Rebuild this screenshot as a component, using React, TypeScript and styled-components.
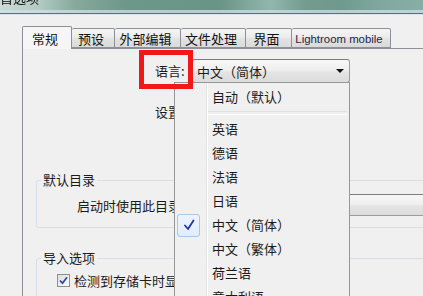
import React from "react";
import styled, { createGlobalStyle } from "styled-components";

const Global = createGlobalStyle`
  html, body { margin: 0; padding: 0; background: #f0f0f0; }
  body {
    font-family: "Noto Sans CJK SC", "Noto Sans", "Liberation Sans", sans-serif;
    font-size: 13px;
    color: #1b1b1b;
  }
  * { box-sizing: border-box; }
`;

const Window = styled.div`
  position: relative;
  width: 423px;
  height: 296px;
  overflow: hidden;
  background: #f0f0f0;
  display: flex;
  flex-direction: column;
`;

const TitleBar = styled.div`
  flex: none;
  height: 15px;
  overflow: hidden;
  background:
    linear-gradient(to bottom, rgba(0,0,0,0) 0 10px, rgba(205,225,234,0.75) 10px 13px, #5e6e7a 13px 14px, #dfe3e6 14px 15px),
    linear-gradient(to right, #cadbd4 0%, #b4cbc3 9%, #86a99c 18%, #6d9789 30%, #6a9486 52%, #7ea69a 58%, #93b6ac 64%, #739c8f 72%, #6f998c 80%, #80a89e 90%, #88aea5 100%);
`;

const TitleText = styled.div`
  font-size: 13px;
  line-height: 16px;
  margin-top: -10px;
  color: #101010;
  filter: blur(0.35px);
`;

const Body = styled.div`
  flex: 1;
  min-height: 0;
  display: flex;
  flex-direction: column;
  padding: 11px 0 0 22px;
`;

const TabRow = styled.div`
  flex: none;
  display: flex;
  align-items: flex-end;
  height: 22px;
  position: relative;
  z-index: 1;
`;

const Tab = styled.div<{ $w: number; $active?: boolean; $latin?: boolean }>`
  width: ${(p) => p.$w}px;
  height: ${(p) => (p.$active ? 23 : 20)}px;
  margin-bottom: ${(p) => (p.$active ? -1 : 0)}px;
  border: 1px solid #8d9097;
  border-bottom: ${(p) => (p.$active ? "none" : "1px solid #8d9097")};
  border-left-width: ${(p) => (p.$active ? 1 : 0)}px;
  border-radius: 2px 2px 0 0;
  background: ${(p) =>
    p.$active
      ? "#f6f6f6"
      : "linear-gradient(#f5f5f5, #ececec 45%, #e2e2e2 55%, #dadada)"};
  display: flex;
  align-items: center;
  justify-content: center;
  padding-right: 4px;
  padding-top: ${(p) => (p.$active ? 0 : 1)}px;
  font-family: ${(p) =>
    p.$latin ? `"Liberation Sans", Arial, sans-serif` : "inherit"};
  font-size: ${(p) => (p.$latin ? "11.4px" : "13px")};
  color: ${(p) => (p.$latin ? "#1c2748" : "#111")};
  white-space: nowrap;
`;

const Panel = styled.div`
  flex: 1;
  border-top: 1px solid #8d9097;
  border-left: 1px solid #8d9097;
  padding-left: 13px;
  display: flex;
  flex-direction: column;
`;

const FieldRow = styled.div<{ $top: number }>`
  display: flex;
  align-items: center;
  height: 24px;
  margin-top: ${(p) => p.$top}px;
  padding-left: 119px;
  gap: 7px;
`;

const FieldLabel = styled.span`
  width: 30px;
  white-space: nowrap;
  line-height: 16px;
`;

const Combo = styled.div<{ $w: number; $h: number }>`
  width: ${(p) => p.$w}px;
  height: ${(p) => p.$h}px;
  flex: none;
  border: 1px solid #9c9c9c;
  border-top-color: #7c7c7c;
  border-radius: 3px;
  background: linear-gradient(#f7f7f7, #efefef 45%, #e4e4e4 55%, #dcdcdc);
  display: flex;
  align-items: center;
  justify-content: space-between;
  padding: 0 5px 0 4px;
  white-space: nowrap;
`;

const Arrow = styled.span`
  width: 0;
  height: 0;
  border-left: 4px solid transparent;
  border-right: 4px solid transparent;
  border-top: 4px solid #111;
`;

const GroupBox = styled.div<{ $top: number; $pb: number }>`
  width: 420px;
  margin-top: ${(p) => p.$top}px;
  border: 1px solid #d5dfe5;
  border-radius: 3px;
  padding-bottom: ${(p) => p.$pb}px;
  display: flex;
  flex-direction: column;
`;

const GroupTitle = styled.span`
  align-self: flex-start;
  margin: -9px 0 0 4px;
  padding: 0 2px;
  background: #f0f0f0;
  line-height: 16px;
  font-size: 13px;
  white-space: nowrap;
`;

const GroupRow = styled.div<{ $top: number; $indent: number }>`
  display: flex;
  align-items: center;
  margin-top: ${(p) => p.$top}px;
  padding-left: ${(p) => p.$indent}px;
  gap: 4px;
  white-space: nowrap;
`;

const CheckBox = styled.span`
  width: 13px;
  height: 13px;
  flex: none;
  border: 1px solid #8e8f8f;
  background: linear-gradient(135deg, #dcdcdc, #fdfdfd);
  display: flex;
  align-items: center;
  justify-content: center;
`;

const Menu = styled.div`
  position: absolute;
  left: 174px;
  top: 82px;
  width: 176px;
  height: 240px;
  border: 1px solid #979797;
  padding-top: 2px;
  background: linear-gradient(
    to right,
    #f0f0f0 0 31px,
    #e2e3e3 31px 32px,
    #ffffff 32px 33px,
    #f0f0f0 33px
  );
  z-index: 5;
`;

const MenuItem = styled.div`
  display: grid;
  grid-template-columns: 31px 1fr;
  align-items: center;
  height: 24px;
`;

const MenuText = styled.span`
  padding-left: 6px;
  line-height: 16px;
  font-size: 13px;
  color: #1a1a1a;
  white-space: nowrap;
`;

const Gutter = styled.span`
  display: flex;
  align-items: center;
  padding-left: 2px;
  height: 24px;
`;

const CheckMark = styled.span`
  width: 23px;
  height: 23px;
  border: 1px solid #a9c6ee;
  border-radius: 3px;
  background: linear-gradient(#eef4fd, #e2ecfb);
  display: flex;
  align-items: center;
  justify-content: center;
`;

const Separator = styled.div`
  height: 8px;
  display: flex;
  align-items: center;
  padding: 0 2px 0 33px;
  &::after {
    content: "";
    flex: 1;
    height: 2px;
    border-top: 1px solid #e0e0e0;
    border-bottom: 1px solid #ffffff;
  }
`;

const Highlight = styled.div`
  position: absolute;
  left: 139px;
  top: 50px;
  width: 54px;
  height: 39px;
  border: 5px solid #f01818;
  z-index: 10;
`;

const tabs: { label: string; w: number; latin?: boolean }[] = [
  { label: "常规", w: 50 },
  { label: "预设", w: 43 },
  { label: "外部编辑", w: 66 },
  { label: "文件处理", w: 65 },
  { label: "界面", w: 46 },
  { label: "Lightroom mobile", w: 99, latin: true },
];

const languages = [
  "英语",
  "德语",
  "法语",
  "日语",
  "中文（简体）",
  "中文（繁体）",
  "荷兰语",
  "意大利语",
];

export default function App() {
  return (
    <>
      <Global />
      <Window>
        <TitleBar>
          <TitleText>首选项</TitleText>
        </TitleBar>
        <Body>
          <TabRow>
            {tabs.map((t, i) => (
              <Tab key={t.label} $w={t.w} $active={i === 0} $latin={t.latin}>
                {t.label}
              </Tab>
            ))}
          </TabRow>
          <Panel>
            <FieldRow $top={10}>
              <FieldLabel>语言:</FieldLabel>
              <Combo $w={158} $h={24}>
                <span>中文（简体）</span>
                <Arrow />
              </Combo>
            </FieldRow>
            <FieldRow $top={17}>
              <FieldLabel>设置:</FieldLabel>
              <CheckBox />
              <span>启动时显示启动画面</span>
            </FieldRow>
            <GroupBox $top={56} $pb={11}>
              <GroupTitle>默认目录</GroupTitle>
              <GroupRow $top={6} $indent={40}>
                <span>启动时使用此目录:</span>
                <Combo $w={260} $h={22}>
                  <span>载入最近打开的目录</span>
                  <Arrow />
                </Combo>
              </GroupRow>
            </GroupBox>
            <GroupBox $top={30} $pb={20}>
              <GroupTitle>导入选项</GroupTitle>
              <GroupRow $top={5} $indent={20}>
                <CheckBox>
                  <svg width="9" height="9" viewBox="0 0 9 9">
                    <path
                      d="M1 4.5 L3.5 7.2 L8 1.2"
                      fill="none"
                      stroke="#2a46a0"
                      strokeWidth="1.7"
                    />
                  </svg>
                </CheckBox>
                <span>检测到存储卡时显示导入对话框</span>
              </GroupRow>
            </GroupBox>
          </Panel>
        </Body>

        <Menu>
          <MenuItem>
            <Gutter />
            <MenuText>自动（默认）</MenuText>
          </MenuItem>
          <Separator />
          {languages.map((l) => (
            <MenuItem key={l}>
              <Gutter>
                {l === "中文（简体）" && (
                  <CheckMark>
                    <svg width="14" height="14" viewBox="0 0 14 14">
                      <path
                        d="M3 7.5 L6 11 L11.5 2.5"
                        fill="none"
                        stroke="#1c37a6"
                        strokeWidth="1.8"
                        strokeLinecap="round"
                        strokeLinejoin="round"
                      />
                    </svg>
                  </CheckMark>
                )}
              </Gutter>
              <MenuText>{l}</MenuText>
            </MenuItem>
          ))}
        </Menu>
        <Highlight />
      </Window>
    </>
  );
}
